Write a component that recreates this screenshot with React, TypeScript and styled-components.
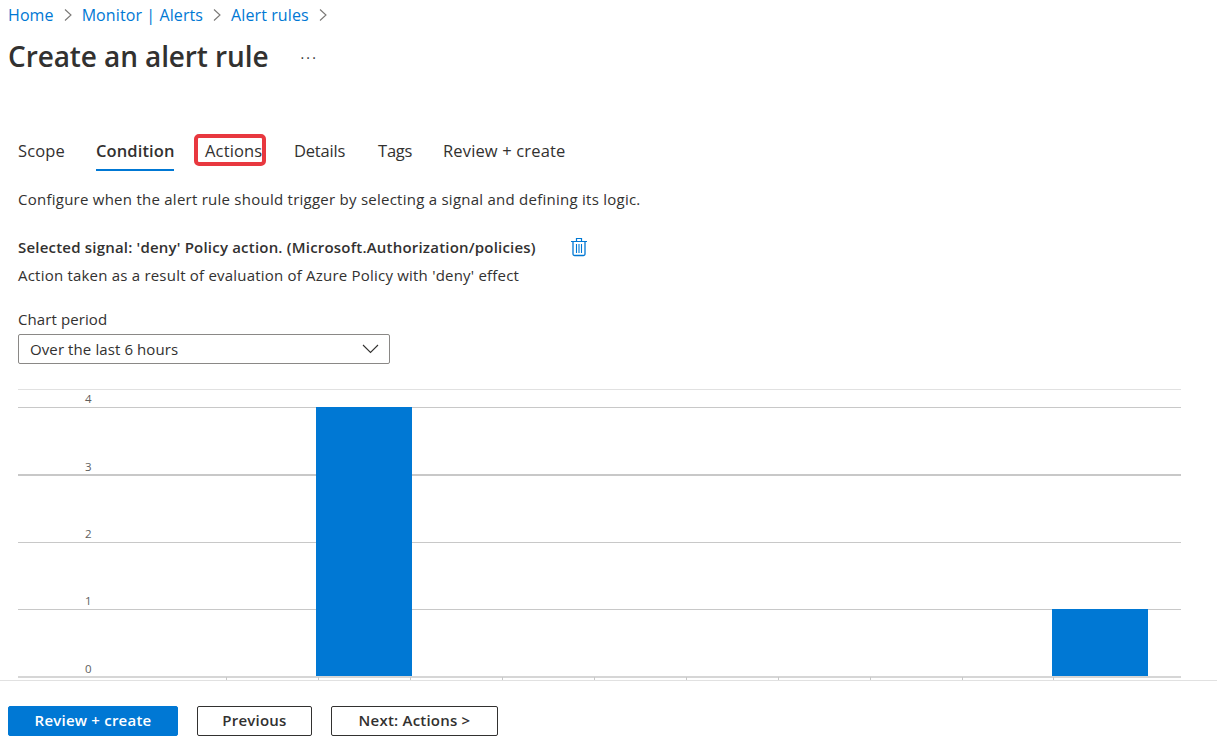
import React from "react";
import styled, { createGlobalStyle } from "styled-components";

const Global = createGlobalStyle`
  html, body { margin: 0; padding: 0; background: #fff; }
  body { font-family: "Open Sans", "Noto Sans", "Liberation Sans", sans-serif; color: #323130; }
`;

const Page = styled.div`
  width: 1217px;
  height: 749px;
  overflow: hidden;
  display: flex;
  flex-direction: column;
`;

const Breadcrumbs = styled.nav`
  display: flex;
  align-items: center;
  height: 30px;
  padding-left: 8px;
`;

const Crumb = styled.a`
  color: #0078d4;
  font-size: 16px;
  letter-spacing: 0.1px;
  line-height: 30px;
`;

const CrumbSep = styled.svg`
  width: 10px;
  height: 14px;
  margin: 0 9px 0 9px;
`;

const TitleRow = styled.div`
  display: flex;
  align-items: center;
  height: 52px;
  padding-left: 8px;
`;

const Title = styled.h1`
  margin: 0;
  font-size: 28px;
  font-weight: 600;
  letter-spacing: -0.1px;
  color: #323130;
`;

const More = styled.span`
  margin-left: 32px;
  font-size: 14px;
  color: #323130;
  letter-spacing: 2.2px;
  position: relative;
  top: 1px;
`;

const Tabs = styled.div`
  display: flex;
  margin-top: 43px;
  padding-left: 18px;
  height: 52px;
`;

const Tab = styled.div<{ $active?: boolean; $w: number; $mark?: boolean; $tight?: boolean }>`
  position: relative;
  width: ${(p) => p.$w}px;
  font-size: 16.5px;
  letter-spacing: ${(p) => (p.$tight ? -0.2 : p.$active ? 0.1 : 0.15)}px;
  line-height: 52px;
  height: 53px;
  box-sizing: border-box;
  text-align: left;
  white-space: nowrap;
  font-weight: ${(p) => (p.$active ? 600 : 400)};
  color: #323130;
  &::after {
    content: "";
    display: ${(p) => (p.$active ? "block" : "none")};
    position: absolute;
    left: 0;
    top: 44px;
    width: 78px;
    height: 2px;
    background: #0078d4;
  }
  &::before {
    content: "";
    display: ${(p) => (p.$mark ? "block" : "none")};
    position: absolute;
    left: -11px;
    top: 9px;
    width: 72px;
    height: 32px;
    box-sizing: border-box;
    border: 4px solid #e8383f;
    border-radius: 5px;
  }
`;

const Body = styled.div`
  padding: 0 18px;
  font-size: 15px;
  letter-spacing: 0.25px;
  color: #323130;
`;

const Description = styled.p`
  margin: 0;
  padding-top: 12px;
  line-height: 20px;
`;

const SignalRow = styled.div`
  display: flex;
  align-items: center;
  margin-top: 28px;
  height: 20px;
`;

const SignalName = styled.span`
  font-weight: 600;
  letter-spacing: 0.2px;
`;

const Trash = styled.svg`
  width: 18px;
  height: 20px;
  margin-left: 34px;
`;

const SignalText = styled.p`
  margin: 8px 0 0;
  line-height: 20px;
  letter-spacing: 0.21px;
`;

const FieldLabel = styled.label`
  display: block;
  margin-top: 24px;
  line-height: 20px;
  letter-spacing: 0.1px;
`;

const Select = styled.div`
  box-sizing: border-box;
  width: 372px;
  height: 30px;
  margin-top: 5px;
  padding: 0 10px 0 11px;
  display: flex;
  align-items: center;
  justify-content: space-between;
  border: 1px solid #8a8886;
  border-radius: 2px;
  letter-spacing: 0.1px;
`;

const Chevron = styled.svg`
  width: 17px;
  height: 10px;
`;

const ChartArea = styled.svg`
  display: block;
  flex: none;
  margin-top: 25px;
  width: 1217px;
  height: 292px;
`;

const Axis = styled.text`
  font-family: "Open Sans", "Noto Sans", sans-serif;
  font-size: 11.5px;
  fill: #605e5c;
`;

const Footer = styled.footer`
  display: flex;
  align-items: center;
  padding: 25px 0 0 8px;
`;

const Button = styled.button<{ $primary?: boolean; $w: number; $gap?: number }>`
  box-sizing: border-box;
  width: ${(p) => p.$w}px;
  height: 30px;
  margin-right: ${(p) => p.$gap ?? 19}px;
  padding: 0 0 2px;
  border-radius: 2px;
  border: 1px solid ${(p) => (p.$primary ? "#0078d4" : "#323130")};
  background: ${(p) => (p.$primary ? "#0078d4" : "#fff")};
  color: ${(p) => (p.$primary ? "#fff" : "#323130")};
  font-family: inherit;
  font-size: 15px;
  font-weight: 600;
  letter-spacing: 0.22px;
`;

const xTicks = [226, 318, 410, 502, 594, 686, 778, 870, 962, 1053];
const top = 389;
const Y = (v: number) => v - top;

export default function App() {
  const sep = (
    <CrumbSep viewBox="0 0 10 14">
      <path d="M2 1.5 L8 7 L2 12.5" fill="none" stroke="#7a7876" strokeWidth="1.1" />
    </CrumbSep>
  );
  return (
    <Page>
      <Global />
      <Breadcrumbs>
        <Crumb>Home</Crumb>
        {sep}
        <Crumb>Monitor | Alerts</Crumb>
        {sep}
        <Crumb>Alert rules</Crumb>
        {sep}
      </Breadcrumbs>
      <TitleRow>
        <Title>Create an alert rule</Title>
        <More>···</More>
      </TitleRow>
      <Tabs>
        <Tab $w={78}>Scope</Tab>
        <Tab $w={109} $active>Condition</Tab>
        <Tab $w={89} $mark>Actions</Tab>
        <Tab $w={84} $tight>Details</Tab>
        <Tab $w={65} $tight>Tags</Tab>
        <Tab $w={140}>Review + create</Tab>
      </Tabs>
      <Body>
        <Description>Configure when the alert rule should trigger by selecting a signal and defining its logic.</Description>
        <SignalRow>
          <SignalName>Selected signal: 'deny' Policy action. (Microsoft.Authorization/policies)</SignalName>
          <Trash viewBox="0 0 18 20">
            <path d="M1 4.5 H17 M6.5 4 V1.5 H11.5 V4" fill="none" stroke="#0078d4" strokeWidth="1.2" />
            <path d="M3 4.5 V17 Q3 18.5 4.5 18.5 H13.5 Q15 18.5 15 17 V4.5" fill="none" stroke="#0078d4" strokeWidth="1.3" />
            <path d="M6.5 7 V16 M9 7 V16 M11.5 7 V16" fill="none" stroke="#0078d4" strokeWidth="1.1" />
          </Trash>
        </SignalRow>
        <SignalText>Action taken as a result of evaluation of Azure Policy with 'deny' effect</SignalText>
        <FieldLabel>Chart period</FieldLabel>
        <Select>
          <span>Over the last 6 hours</span>
          <Chevron viewBox="0 0 17 10">
            <path d="M1 1 L8.5 8.5 L16 1" fill="none" stroke="#323130" strokeWidth="1.1" />
          </Chevron>
        </Select>
      </Body>
      <ChartArea viewBox="0 0 1217 292">
        <line x1="18" x2="1181" y1={Y(389.5)} y2={Y(389.5)} stroke="#e1e1e1" />
        <line x1="18" x2="1181" y1={Y(407.5)} y2={Y(407.5)} stroke="#c8c8c8" />
        <line x1="18" x2="1181" y1={Y(475)} y2={Y(475)} stroke="#c8c8c8" strokeWidth="2" />
        <line x1="18" x2="1181" y1={Y(542.5)} y2={Y(542.5)} stroke="#c8c8c8" />
        <line x1="18" x2="1181" y1={Y(609.5)} y2={Y(609.5)} stroke="#c8c8c8" />
        <line x1="18" x2="1181" y1={Y(677)} y2={Y(677)} stroke="#c8c8c8" strokeWidth="1.5" />
        <rect x="316" y={Y(407)} width="96" height="269" fill="#0078d4" />
        <rect x="1052" y={Y(609)} width="96" height="67" fill="#0078d4" />
        {xTicks.map((x) => (
          <line key={x} x1={x + 0.5} x2={x + 0.5} y1={Y(677)} y2={Y(680)} stroke="#c8c8c8" />
        ))}
        <line x1="0" x2="1217" y1={Y(680.5)} y2={Y(680.5)} stroke="#e1e1e1" />
        <Axis x="85" y={Y(403)}>4</Axis>
        <Axis x="85" y={Y(471)}>3</Axis>
        <Axis x="85" y={Y(538)}>2</Axis>
        <Axis x="85" y={Y(605)}>1</Axis>
        <Axis x="85" y={Y(673)}>0</Axis>
      </ChartArea>
      <Footer>
        <Button $primary $w={170}>Review + create</Button>
        <Button $w={115}>Previous</Button>
        <Button $w={167}>Next: Actions &gt;</Button>
      </Footer>
    </Page>
  );
}
